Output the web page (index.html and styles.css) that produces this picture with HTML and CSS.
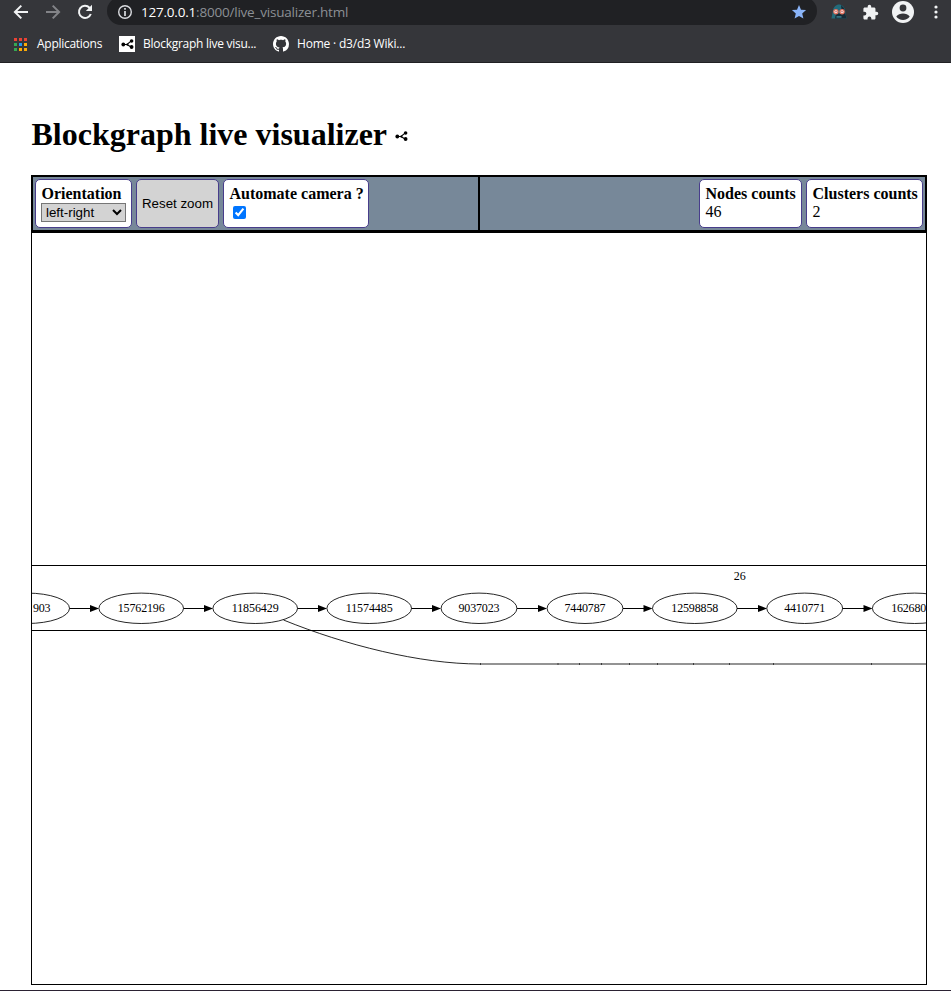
FILE: index.html
```html
<!DOCTYPE html>
<html lang="en">
<head>
<meta charset="utf-8">
<title>Blockgraph live visualizer</title>
<link rel="stylesheet" href="styles.css">
</head>
<body>
<svg width="0" height="0" class="defs">
  <symbol id="share" viewBox="0 0 13 10">
    <path d="M2.5 5.5H6L10 2.2M6 5.5L10 8" fill="none" stroke="#000" stroke-width="1.1"/>
    <circle cx="2.3" cy="5.5" r="1.9"/><circle cx="10.6" cy="2" r="1.8"/><circle cx="10.6" cy="8" r="1.9"/><circle cx="6.3" cy="5.6" r="1.1"/>
  </symbol>
</svg>
<header class="browser">
  <div class="nav">
    <svg class="arrow" width="16" height="16" viewBox="0 0 16 16"><path d="M15 8H2M8.3 1.6L1.9 8l6.4 6.4" fill="none" stroke="#f1f3f4" stroke-width="2"/></svg>
    <svg class="arrow forward" width="16" height="16" viewBox="0 0 16 16"><path d="M1 8h13M7.7 1.6L14.1 8l-6.4 6.4" fill="none" stroke="#838488" stroke-width="2"/></svg>
    <svg class="reload" width="16" height="16" viewBox="0 0 16 16"><path d="M13.8 10A6.1 6.1 0 1 1 12.5 3.7L14 5.2" fill="none" stroke="#f1f3f4" stroke-width="2"/><path d="M15 .8V7H8.8z" fill="#f1f3f4"/></svg>
    <div class="address">
      <svg width="16" height="16" viewBox="0 0 16 16"><circle cx="8" cy="8" r="6.3" fill="none" stroke="#dadce0" stroke-width="1.4"/><path d="M8 7v5M8 4v1.8" stroke="#dadce0" stroke-width="1.7"/></svg>
      <span class="url"><span class="host">127.0.0.1</span>:8000/live_visualizer.html</span>
      <svg class="star" width="16" height="16" viewBox="0 0 16 16"><path d="M8 1l2 4.7 5.1.4-3.9 3.4 1.2 5L8 11.9l-4.4 2.6 1.2-5L.9 6.1 6 5.7z" fill="#8ab4f8"/></svg>
    </div>
    <svg class="mask" width="18" height="16" viewBox="0 0 18 16"><path d="M1.5 14.500L3 6C4 2 7 .5 9 .5s5 1.500 6 5.500l1.500 8.500z" fill="#236b7b"/><path d="M5 14.500l1-5h6l2 5zM11 1l3 3 2.500 10.500h-4z" fill="#172b36"/><path d="M6.500 12h5v1.800h-5z" fill="#347181"/><circle cx="5.900" cy="7.800" r="2.100" fill="#fff" stroke="#e8705a" stroke-width="1.200"/><circle cx="12.100" cy="7.800" r="2.100" fill="#fff" stroke="#e8705a" stroke-width="1.200"/><circle cx="6" cy="7.800" r=".7" fill="#a33"/><circle cx="12" cy="7.800" r=".7" fill="#a33"/></svg>
    <svg class="puzzle" width="17" height="17" viewBox="0 0 24 24"><path fill="#f1f3f4" d="M20.5 11H19V7c0-1.1-.9-2-2-2h-4V3.500a2.500 2.500 0 0 0-5 0V5H4c-1.100 0-2 .9-2 2v3.800h1.500a2.700 2.700 0 0 1 0 5.400H2V20c0 1.100.9 2 2 2h3.800v-1.500a2.700 2.700 0 0 1 5.400 0V22H17c1.100 0 2-.9 2-2v-4h1.500a2.500 2.500 0 0 0 0-5z"/></svg>
    <svg class="avatar" width="22" height="22" viewBox="0 0 22 22"><circle cx="11" cy="11" r="11" fill="#f1f3f4"/><circle cx="11" cy="7" r="3.400" fill="#35363a"/><path d="M4.300 15.500C5.500 13.300 8.500 12.400 11 12.400s5.500.9 6.700 3.100C16.300 17.700 13.800 19 11 19s-5.300-1.300-6.700-3.500z" fill="#35363a"/></svg>
    <svg class="dots" width="4" height="16" viewBox="0 0 4 16"><g fill="#f1f3f4"><circle cx="2" cy="3" r="1.600"/><circle cx="2" cy="8" r="1.600"/><circle cx="2" cy="13" r="1.600"/></g></svg>
  </div>
  <div class="bookmarks">
    <svg class="apps" width="13" height="13" viewBox="0 0 13 13"><path fill="#ea4335" d="M0 0h3v3H0zM5 0h3v3H5zM10 0h3v3h-3z"/><path fill="#34a853" d="M0 5h3v3H0zM0 10h3v3H0z"/><path fill="#2196f3" d="M5 5h3v3H5z"/><path fill="#fbab08" d="M10 5h3v3h-3zM5 10h3v3H5zM10 10h3v3h-3z"/></svg>
    <span class="bm-apps">Applications</span>
    <span class="favicon"><svg width="13" height="10"><use href="#share"/></svg></span>
    <span class="bm-graph">Blockgraph live visu...</span>
    <svg class="github" width="16" height="16" viewBox="0 0 16 16"><path fill="#fff" d="M8 0C3.580 0 0 3.580 0 8c0 3.540 2.290 6.530 5.470 7.590.4.070.55-.17.55-.38 0-.19-.01-.82-.01-1.490-2.010.37-2.530-.49-2.690-.94-.09-.23-.48-.94-.82-1.130-.28-.15-.68-.52-.01-.53.63-.01 1.080.58 1.230.82.72 1.210 1.870.87 2.330.66.070-.52.28-.87.51-1.070-1.780-.2-3.640-.89-3.640-3.950 0-.87.31-1.590.82-2.150-.08-.2-.36-1.020.08-2.120 0 0 .67-.21 2.200.82.64-.18 1.320-.27 2-.27s1.360.09 2 .27c1.530-1.040 2.200-.82 2.200-.82.44 1.100.16 1.920.08 2.120.51.56.82 1.270.82 2.150 0 3.070-1.870 3.750-3.650 3.950.29.25.54.73.54 1.480 0 1.070-.01 1.930-.01 2.200 0 .21.15.46.55.38A8 8 0 0 0 16 8c0-4.420-3.580-8-8-8z"/></svg>
    <span class="bm-home">Home · d3/d3 Wiki...</span>
  </div>
</header>
<main>
  <h1>Blockgraph live visualizer <svg width="13" height="10"><use href="#share"/></svg></h1>
  <div class="toolbar">
    <div class="group">
      <div class="card orientation"><b>Orientation</b><select><option>left-right</option></select></div>
      <button class="card reset">Reset zoom</button>
      <div class="card camera"><b>Automate camera ?</b><input type="checkbox" checked></div>
    </div>
    <div class="group counts">
      <div class="card nodes"><b>Nodes counts</b><span>46</span></div>
      <div class="card clusters"><b>Clusters counts</b><span>2</span></div>
    </div>
  </div>
  <svg class="graph" viewBox="32 233 894 751">
    <g fill="none" stroke="#000" stroke-width=".85">
      <path d="M20 565.500H940M20 630.500H940" stroke-width="1"/>
      <path d="M283.500 620C345 645 420 664 480 664H940"/>
      <path d="M480.500 663v2M558 663v2M579.500 663v2M601.500 663v2M629.500 663v2M657.500 663v2M693.500 663v2M729.500 663v2M773.500 663v2M871.500 663v2" stroke-width=".6"/>
      <ellipse cx="27.200" cy="608.300" rx="42.300" ry="15.200"/>
      <ellipse cx="141.200" cy="608.300" rx="42.300" ry="15.200"/>
      <ellipse cx="255.200" cy="608.300" rx="42.300" ry="15.200"/>
      <ellipse cx="369.200" cy="608.300" rx="42.300" ry="15.200"/>
      <ellipse cx="479" cy="608.300" rx="37.900" ry="15.200"/>
      <ellipse cx="585" cy="608.300" rx="37.900" ry="15.200"/>
      <ellipse cx="694.800" cy="608.300" rx="42.300" ry="15.200"/>
      <ellipse cx="804.700" cy="608.300" rx="37.900" ry="15.200"/>
      <ellipse cx="914.700" cy="608.300" rx="42.300" ry="15.200"/>
      <path d="M69.500 608.500H91M183.500 608.500H205M297.500 608.500H319M411.500 608.500H433M517 608.500H539M623 608.500H645M737 608.500H759M842.500 608.500H864" stroke-width="1"/>
    </g>
    <path d="M90 605l9 3.500-9 3.500zM204 605l9 3.500-9 3.500zM318 605l9 3.500-9 3.500zM432 605l9 3.500-9 3.500zM538 605l9 3.500-9 3.500zM643.500 605l9 3.500-9 3.500zM758 605l9 3.500-9 3.500zM863.500 605l9 3.500-9 3.500z"/>
    <g class="labels">
      <text x="41.800" y="612" textLength="17.500">903</text>
      <text x="141.200" y="612" textLength="47">15762196</text>
      <text x="255.200" y="612" textLength="47">11856429</text>
      <text x="369.200" y="612" textLength="47">11574485</text>
      <text x="479" y="612" textLength="41">9037023</text>
      <text x="585" y="612" textLength="41">7440787</text>
      <text x="694.800" y="612" textLength="47">12598858</text>
      <text x="804.700" y="612" textLength="41">4410771</text>
      <text x="908.700" y="612" textLength="35">162680</text>
      <text x="739.700" y="580" textLength="12">26</text>
    </g>
  </svg>
</main>
</body>
</html>
```
FILE: styles.css
```css
* { box-sizing: border-box; }
body {
  margin: 0;
  height: 991px;
  overflow: hidden;
  background: #fff;
  border-bottom: 1px solid #2b2233;
  font: 16px/18px "Liberation Serif", serif;
  color: #000;
}
svg { display: block; flex: none; }
.defs { position: absolute; }
.browser {
  height: 63px;
  background: #35363a;
  border-bottom: 1px solid #202124;
  font-family: "Open Sans", sans-serif;
  overflow: hidden;
}
.nav { display: flex; align-items: center; height: 24px; padding-left: 13px; }
.forward { margin-left: 16px; }
.reload { margin-left: 16px; }
.address {
  display: flex;
  align-items: center;
  width: 710px;
  height: 28px;
  margin: -2px 0 0 14px;
  padding: 2px 10px 0;
  border-radius: 14px;
  background: #202124;
}
.url {
  margin-left: 8px;
  font-size: 13.500px;
  letter-spacing: -.21px;
  color: #8c9095;
  white-space: nowrap;
}
.host { color: #fff; }
.star { margin-left: auto; }
.mask { margin-left: 13px; }
.puzzle { margin-left: 14px; }
.avatar { margin-left: 13px; }
.dots { margin-left: 20px; }
.bookmarks {
  display: flex;
  align-items: center;
  height: 40px;
  padding-left: 14px;
  font-size: 12px;
  color: #fff;
  white-space: nowrap;
}
.bm-apps { width: 66px; margin-left: 10px; letter-spacing: -.27px; }
.favicon { display: grid; place-items: center; width: 16px; height: 16px; margin-left: 16px; background: #fff; }
.bm-graph { width: 114px; margin-left: 8px; letter-spacing: -.27px; }
.github { margin-left: 16px; }
.bm-home { margin-left: 8px; letter-spacing: -.2px; }
main { width: 896px; margin: 0 0 0 31px; padding-top: 52px; }
h1 {
  display: flex;
  align-items: center;
  height: 38px;
  margin: 0 0 22px;
  padding-left: .5px;
  font-size: 32px;
  line-height: 38px;
}
h1 svg { margin: 4px 0 0 7.500px; }
.toolbar {
  display: flex;
  height: 57px;
  border: 2px solid #000;
  background: #778899;
}
.group { display: flex; flex: none; width: 445px; padding: 2px; gap: 4px; }
.counts { width: 447px; justify-content: flex-end; border-left: 2px solid #000; }
.card {
  display: flex;
  flex-direction: column;
  height: 49px;
  padding: 5px;
  border: 1px solid #483d8b;
  border-radius: 5px;
  background: #fff;
  white-space: nowrap;
}
.orientation { width: 97px; }
.camera { width: 146px; }
.nodes { width: 103px; }
.clusters { width: 117px; }
.card b, .card span { padding-left: .5px; }
.reset {
  justify-content: center;
  align-items: center;
  width: 83px;
  background: lightgray;
  color: #000;
  font: 13.333px "Liberation Sans", sans-serif;
}
select {
  width: 85px;
  height: 19px;
  padding: 0;
  border: 1px solid #767676;
  border-radius: 0;
  background: lightgray;
  color: #000;
  font: 13.333px "Liberation Sans", sans-serif;
}
input { width: 13px; height: 13px; margin: 3px 3px 3px 4px; }
.graph { width: 896px; height: 753px; border: 1px solid #000; }
.labels { font-size: 12px; text-anchor: middle; }
```
